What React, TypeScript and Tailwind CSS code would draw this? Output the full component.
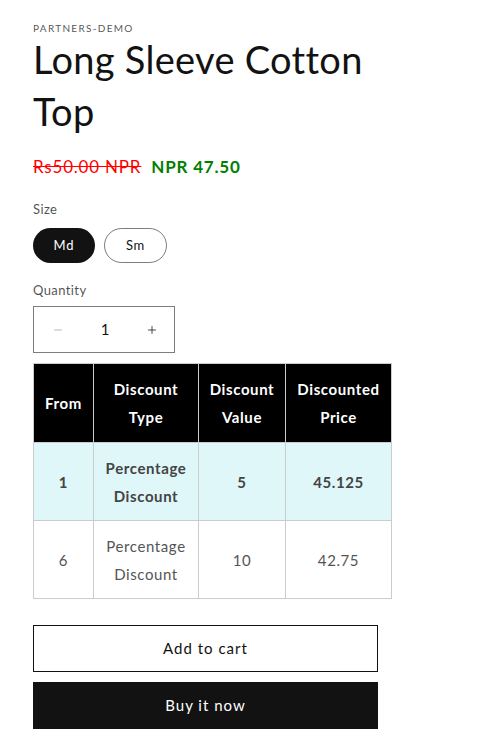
import { Minus, Plus } from "lucide-react";

const rows = [
  { from: "1", type: "Percentage Discount", value: "5", price: "45.125", active: true },
  { from: "6", type: "Percentage Discount", value: "10", price: "42.75", active: false },
];

export default function App() {
  return (
    <div className="min-h-screen bg-white px-[33px] pt-[21px] text-[#121212]" style={{ fontFamily: "Lato, 'Open Sans', sans-serif" }}>
      {/* vendor + title */}
      <p className="text-[10px] uppercase tracking-[1.3px] text-[#121212]/75 leading-[14px]">Partners-demo</p>
      <h1 className="-mt-[2px] w-[370px] text-[38px] leading-[52px] tracking-[0.3px] font-normal">Long Sleeve Cotton Top</h1>

      {/* price */}
      <div className="mt-[18px] flex items-center gap-[10px] text-[17px] tracking-[0.8px] leading-[24px]">
        <span className="text-[#ff0000] line-through">Rs50.00 NPR</span>
        <span className="font-bold text-[#008000]">NPR 47.50</span>
      </div>

      {/* size */}
      <p className="mt-[20px] text-[13px] tracking-[0.4px] text-[#121212]/75 leading-[20px]">Size</p>
      <div className="mt-[9px] flex gap-[9px]">
        <button className="h-[35px] w-[62px] rounded-full bg-[#121212] text-[13px] tracking-[0.8px] text-white">Md</button>
        <button className="h-[35px] w-[63px] rounded-full border border-[#121212]/55 text-[13px] tracking-[0.8px]">Sm</button>
      </div>

      {/* quantity */}
      <p className="mt-[17px] text-[13px] tracking-[0.4px] text-[#121212]/75 leading-[20px]">Quantity</p>
      <div className="mt-[6px] flex h-[47px] w-[142px] items-center justify-between border border-[#121212]/55 pl-[18px] pr-[16px]">
        <Minus size={12} strokeWidth={1.5} className="text-[#121212]/40" />
        <span className="text-[15px]">1</span>
        <Plus size={12} strokeWidth={1.5} />
      </div>

      {/* discount table */}
      <table className="mt-[10px] w-[359px] border-collapse text-center text-[15px] tracking-[0.6px] leading-[28px]">
        <thead>
          <tr className="bg-black text-white">
            <th className="w-[60px] border border-[#cccccc] px-[8px] py-[11px] font-bold">From</th>
            <th className="w-[105px] border border-[#cccccc] px-[8px] py-[11px] font-bold">Discount Type</th>
            <th className="w-[87px] border border-[#cccccc] px-[8px] py-[11px] font-bold">Discount Value</th>
            <th className="w-[106px] border border-[#cccccc] px-[8px] py-[11px] font-bold">Discounted Price</th>
          </tr>
        </thead>
        <tbody>
          {rows.map((r) => (
            <tr key={r.from} className={r.active ? "bg-[#e0f7fa] font-bold text-[#444444]" : "bg-white text-[#555555]"}>
              <td className="border border-[#cccccc] px-[8px] py-[10.5px]">{r.from}</td>
              <td className="border border-[#cccccc] px-[8px] py-[10.5px]">{r.type}</td>
              <td className="border border-[#cccccc] px-[8px] py-[10.5px]">{r.value}</td>
              <td className="border border-[#cccccc] px-[8px] py-[10.5px]">{r.price}</td>
            </tr>
          ))}
        </tbody>
      </table>

      {/* buttons */}
      <div className="mt-[26px] flex w-[345px] flex-col gap-[10px]">
        <button className="h-[47px] border border-[#121212] text-[15px] tracking-[1px]">Add to cart</button>
        <button className="h-[47px] bg-[#121212] text-[15px] tracking-[1px] text-white">Buy it now</button>
      </div>
    </div>
  );
}
